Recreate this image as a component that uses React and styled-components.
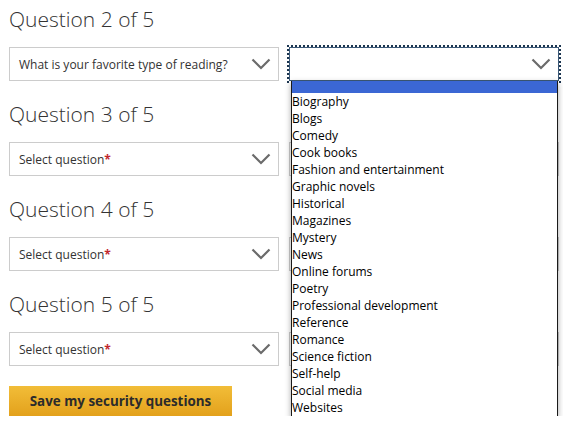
import React from "react";
import styled, { createGlobalStyle } from "styled-components";

const Global = createGlobalStyle`
  html, body { margin: 0; padding: 0; background: #fff; }
  body { font-family: "Open Sans", "Liberation Sans", sans-serif; color: #333; }
`;

const Page = styled.div`
  padding: 4px 0 0 9px;
  width: 554px;
  position: relative;
`;

const Block = styled.section`
  display: flex;
  flex-direction: column;
  gap: 13px;
  margin-bottom: 18px;
`;

const Heading = styled.h2`
  margin: 0;
  font-family: "Open Sans", sans-serif;
  font-weight: 300;
  font-size: 21px;
  line-height: 30px;
  color: #333;
`;

const Row = styled.div`
  display: grid;
  grid-template-columns: 270px 270px;
  column-gap: 10px;
`;

const SelectBox = styled.div`
  position: relative;
  box-sizing: border-box;
  height: 34px;
  border: 1px solid ${(p) => (p.$focused ? "#3d5a78" : "#cccccc")};
  outline: ${(p) => (p.$focused ? "2px dotted #1b3550" : "none")};
  outline-offset: 0;
  background: #fff;
  display: flex;
  align-items: center;
  padding: 0 7px 0 9px;
  font-size: 12px;
  color: #333;
`;

const Label = styled.span`
  flex: 1;
  white-space: nowrap;
`;

const Star = styled.span`
  color: #c1272d;
  font-weight: 700;
`;

const Chevron = () => (
  <svg width="20" height="12" viewBox="0 0 20 12" fill="none">
    <path d="M1.5 1.5 L10 10 L18.5 1.5" stroke="#6b6b6b" strokeWidth="2.2" />
  </svg>
);

const List = styled.ul`
  position: absolute;
  left: 1px;
  right: 0px;
  top: 33px;
  margin: 0;
  padding: 0;
  list-style: none;
  background: #fff;
  border: 1px solid #1a1a1a;
  border-top: none;
  box-shadow: 0 2px 6px rgba(0, 0, 0, 0.35);
  z-index: 5;
`;

const Item = styled.li`
  height: ${(p) => (p.$blank ? "12px" : "17px")};
  line-height: 17px;
  padding-left: 0;
  font-size: 12px;
  color: #000;
  background: ${(p) => (p.$active ? "#3b67d4" : "transparent")};
  white-space: nowrap;
`;

const Button = styled.button`
  margin-top: 2px;
  width: 223px;
  height: 30px;
  border: none;
  background: linear-gradient(#f2bd38, #e3a11c);
  font-family: "Open Sans", sans-serif;
  font-weight: 700;
  font-size: 13.4px;
  color: #2b2b2b;
  padding: 0;
  cursor: pointer;
`;

const options = [
  "Biography",
  "Blogs",
  "Comedy",
  "Cook books",
  "Fashion and entertainment",
  "Graphic novels",
  "Historical",
  "Magazines",
  "Mystery",
  "News",
  "Online forums",
  "Poetry",
  "Professional development",
  "Reference",
  "Romance",
  "Science fiction",
  "Self-help",
  "Social media",
  "Websites",
];

export default function App() {
  return (
    <Page>
      <Global />
      <Block>
        <Heading>Question 2 of 5</Heading>
        <Row>
          <SelectBox>
            <Label>What is your favorite type of reading?</Label>
            <Chevron />
          </SelectBox>
          <SelectBox $focused>
            <Label />
            <Chevron />
            <List>
              <Item $blank $active />
              {options.map((o) => (
                <Item key={o}>{o}</Item>
              ))}
            </List>
          </SelectBox>
        </Row>
      </Block>
      {[3, 4, 5].map((n) => (
        <Block key={n}>
          <Heading>Question {n} of 5</Heading>
          <Row>
            <SelectBox>
              <Label>
                Select question<Star>*</Star>
              </Label>
              <Chevron />
            </SelectBox>
            <SelectBox />
          </Row>
        </Block>
      ))}
      <Button>Save my security questions</Button>
    </Page>
  );
}
